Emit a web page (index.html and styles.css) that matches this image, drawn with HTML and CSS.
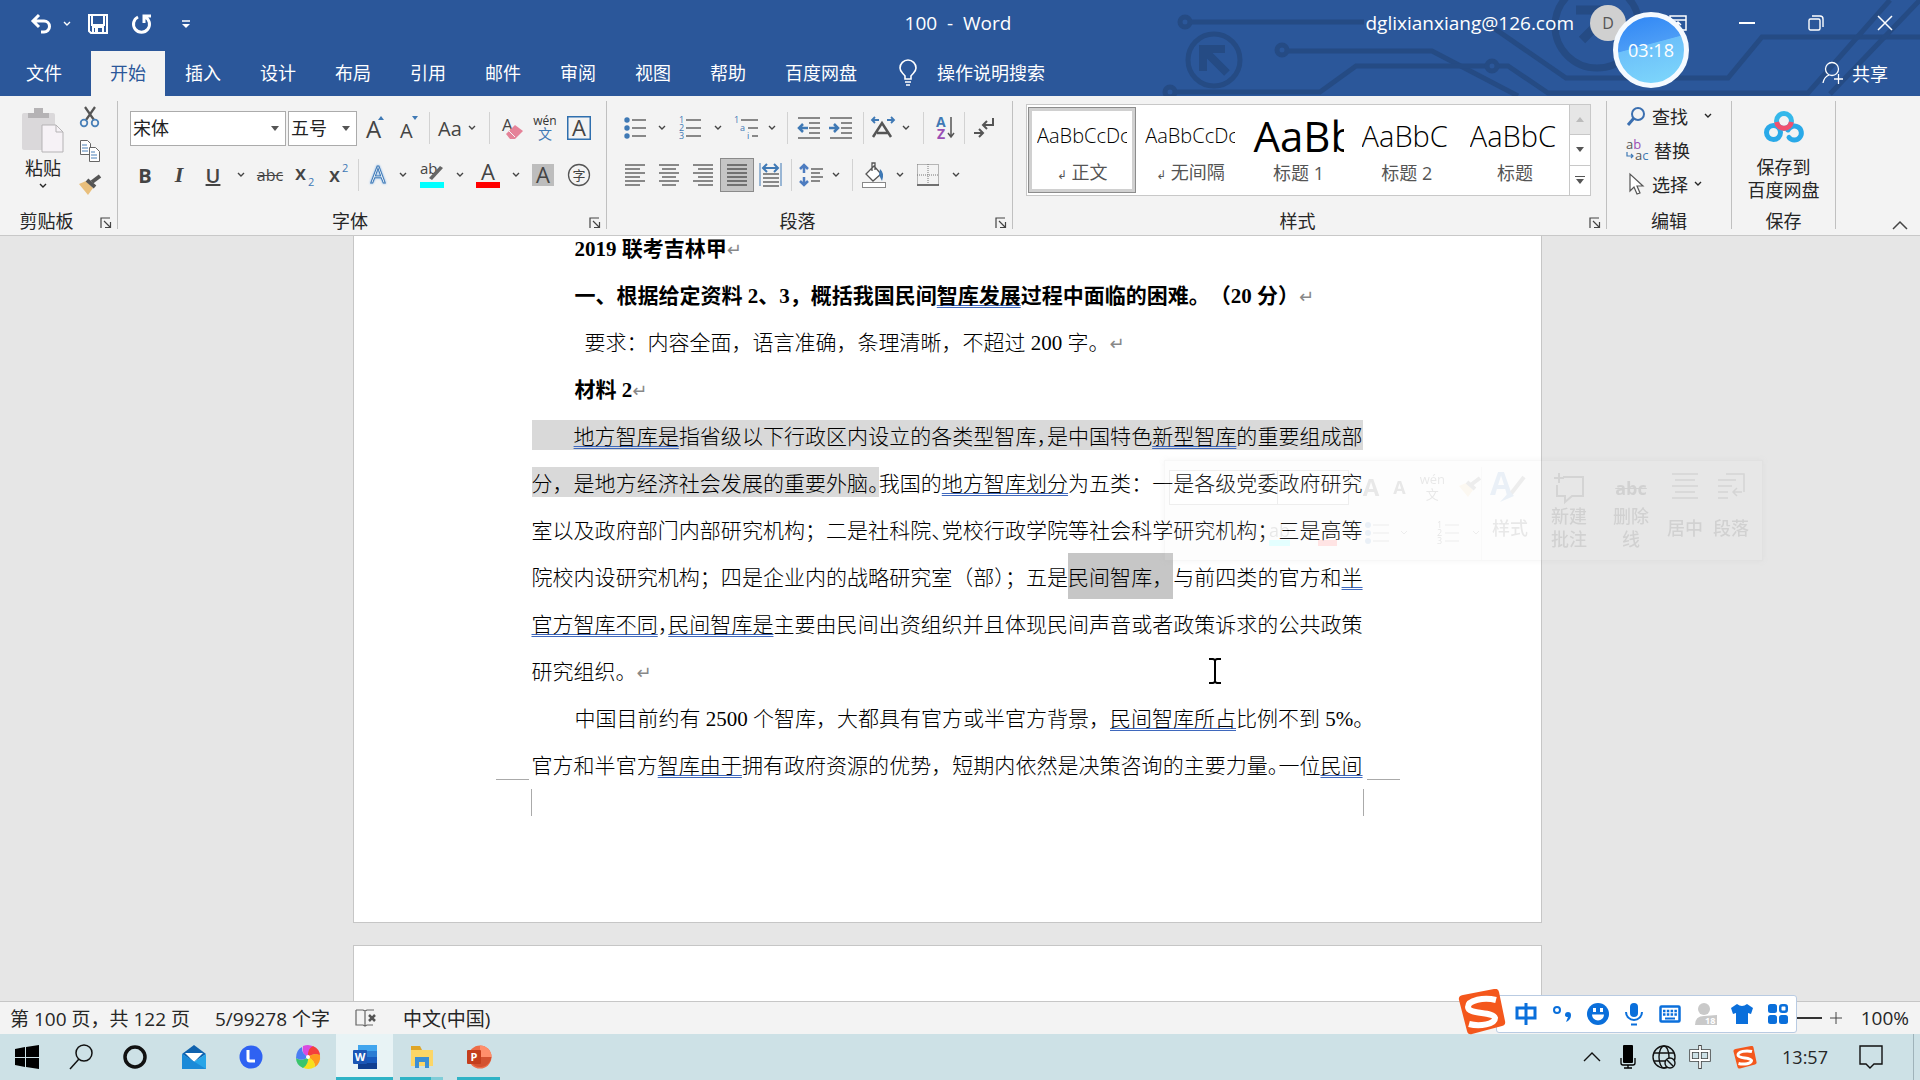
FILE: index.html
```html
<!DOCTYPE html>
<html lang="zh-CN">
<head>
<meta charset="utf-8">
<title>100 - Word</title>
<link rel="stylesheet" href="styles.css">
</head>
<body>
<svg class="defs" aria-hidden="true">
  <symbol id="chev" viewBox="0 0 8 6"><path d="M1 1l3 3 3-3" fill="none" stroke="currentColor" stroke-width="1.4"/></symbol>
  <symbol id="tri" viewBox="0 0 8 5"><path d="M0 0h8L4 5z" fill="currentColor"/></symbol>
  <symbol id="launch" viewBox="0 0 12 12"><path d="M1 11V1h9M4 4l6 6M10.500 5v5.500H5" fill="none" stroke="#444" stroke-width="1.200"/></symbol>
  <symbol id="sogou" viewBox="0 0 48 46"><path d="M5 6L36 0q4-1 5 3l6 29q1 4-3 5l-30 8q-4 1-5-3L1 11q-1-4 4-5z" fill="#f4571c"/><path d="M38 11C26 8 10 11 10 18c0 8 25 4 27 11 0 6-15 9-26 6" fill="none" stroke="#fff" stroke-width="6"/></symbol>
</svg>

<header class="titlebar">
  <svg class="circuit" width="760" height="96" viewBox="0 0 760 96" aria-hidden="true">
    <g fill="none" stroke="#254b84" stroke-width="5">
      <circle cx="25" cy="22" r="5"/><path d="M31 22h173M325 22l81 56h162l34-41h158"/>
      <circle cx="54" cy="60" r="26"/><path d="M43 71V49h22M45 51l22 22" stroke-width="8"/>
      <circle cx="122" cy="50" r="5"/><path d="M128 51h144l86 45"/>
      <circle cx="10" cy="92" r="5"/><path d="M16 92h144l36-26h132M338 66h10l40 27h260l82-93M670 94l90-94"/><circle cx="332" cy="66" r="5"/>
      <circle cx="437" cy="26" r="42" stroke-width="7"/><path d="M416 10h30M422 40l30-30" stroke-width="9"/>
    </g>
  </svg>
  <div class="title-row">
    <div class="quick">
      <button class="q q-undo" aria-label="撤消"><svg width="22" height="20" viewBox="0 0 22 20"><path d="M3 7h11a5 5 0 010 11h-3M9 1L3 7l6 6" fill="none" stroke="currentColor" stroke-width="3"/></svg></button>
      <button class="q q-more" aria-label="撤消列表"><svg width="8" height="6"><use href="#chev"/></svg></button>
      <button class="q q-save" aria-label="保存"><svg width="20" height="20" viewBox="0 0 20 20"><path d="M1 1h18v18H3l-2-2zM4 1v10h12V1M5 19v-6h10v6" fill="none" stroke="currentColor" stroke-width="2"/><path d="M7 14h3v5H7z" fill="currentColor"/></svg></button>
      <button class="q q-redo" aria-label="重复"><svg width="22" height="22" viewBox="0 0 22 22"><path d="M14 4a8 8 0 11-7 0M13 10V3h7" fill="none" stroke="currentColor" stroke-width="3"/></svg></button>
      <button class="q q-cust" aria-label="自定义快速访问工具栏"><svg width="8" height="8" viewBox="0 0 8 8"><path d="M0 1h8" stroke="currentColor" stroke-width="1.500"/><path d="M0 4h8L4 8z" fill="currentColor"/></svg></button>
    </div>
    <h1 class="doc-title">100&nbsp; -&nbsp; Word</h1>
    <div class="account">
      <span>dglixianxiang@126.com</span>
      <span class="avatar">D</span>
      <button class="w-btn w-ribbon" aria-label="功能区显示选项"><svg width="18" height="16" viewBox="0 0 18 16"><path d="M1 1h16v14H1zM1 5h16M9 13V8M6 10l3-3 3 3" fill="none" stroke="currentColor" stroke-width="1.500"/></svg></button>
      <button class="w-btn" aria-label="最小化"><svg width="16" height="2"><path d="M0 1h16" stroke="currentColor" stroke-width="2"/></svg></button>
      <button class="w-btn" aria-label="还原"><svg width="16" height="16" viewBox="0 0 16 16"><rect x="1" y="4" width="11" height="11" rx="1.500" fill="none" stroke="currentColor" stroke-width="1.400"/><path d="M4 1h8q3 0 3 3v8" fill="none" stroke="currentColor" stroke-width="1.400"/></svg></button>
      <button class="w-btn" aria-label="关闭"><svg width="16" height="16" viewBox="0 0 16 16"><path d="M1 1l14 14M15 1L1 15" stroke="currentColor" stroke-width="1.500"/></svg></button>
    </div>
  </div>
  <nav class="tabs">
    <button class="tab tab-file">文件</button>
    <button class="tab active">开始</button>
    <button class="tab">插入</button>
    <button class="tab">设计</button>
    <button class="tab">布局</button>
    <button class="tab">引用</button>
    <button class="tab">邮件</button>
    <button class="tab">审阅</button>
    <button class="tab">视图</button>
    <button class="tab">帮助</button>
    <button class="tab">百度网盘</button>
    <label class="tell"><svg width="18" height="26" viewBox="0 0 18 26"><path d="M6 19v-3C4 13 1 12 1 8a8 8 0 0116 0c0 4-3 5-5 8v3zM6 22h6M7 25h4" fill="none" stroke="currentColor" stroke-width="1.600"/></svg><input type="text" placeholder="操作说明搜索" aria-label="操作说明搜索"></label>
    <button class="share"><svg width="22" height="24" viewBox="0 0 22 24"><circle cx="10" cy="8" r="6.500" fill="none" stroke="currentColor" stroke-width="1.300"/><path d="M1 22q1-6 6-8M12 18h9M16.500 13v10" fill="none" stroke="currentColor" stroke-width="1.300"/></svg>共享</button>
  </nav>
  <div class="timer">03:18</div>
</header>

<section class="ribbon">
  <div class="group g-clip">
    <div class="clip-body">
      <button class="paste"><svg width="42" height="46" viewBox="0 0 42 46"><rect x="0" y="6" width="33" height="37" rx="2" fill="#dad8da"/><path d="M6 6h6V1h9v5h6v5H6z" fill="#b5b3b5"/><path d="M20 18h14l7 7v20H20z" fill="#f6f2f6" stroke="#b5b3b5"/><path d="M34 18v7h7" fill="none" stroke="#b5b3b5"/></svg><span>粘贴</span><svg width="8" height="6"><use href="#chev"/></svg></button>
      <div class="clip-side">
        <button class="ib" aria-label="剪切"><svg width="20" height="22" viewBox="0 0 20 22"><path d="M5 1l9 13M15 1L6 14" stroke="#555" stroke-width="2.200"/><g fill="none" stroke="#4a80b8" stroke-width="1.800"><circle cx="4" cy="17" r="3.300"/><circle cx="15" cy="17" r="3.300"/></g></svg></button>
        <button class="ib" aria-label="复制"><svg width="20" height="22" viewBox="0 0 20 22"><g fill="#fff" stroke="#666"><path d="M.5.5h7l3 3v11H.5z"/><path d="M9.500 7.500h6l4 4v10h-10z"/></g><path d="M2 5h5M2 8h6M2 11h6M11 12h4M11 15h6M11 18h6" stroke="#4a80b8"/></svg></button>
        <button class="ib" aria-label="格式刷"><svg width="22" height="20" viewBox="0 0 22 20"><path d="M0 9l7-3 7 7-5 7z" fill="#e9bf7c"/><path d="M8 5l8 7" stroke="#555" stroke-width="4"/><path d="M13 7l8-6" stroke="#555" stroke-width="4"/></svg></button>
      </div>
    </div>
    <div class="g-label"><span>剪贴板</span><svg width="12" height="12"><use href="#launch"/></svg></div>
  </div>

  <div class="group g-font">
    <div class="rows">
      <div class="row font-r1">
        <span class="combo"><select aria-label="字体"><option>宋体</option></select><svg width="8" height="5"><use href="#tri"/></svg></span>
        <span class="combo combo-size"><select aria-label="字号"><option>五号</option></select><svg width="8" height="5"><use href="#tri"/></svg></span>
        <button class="ib" aria-label="增大字号"><svg width="20" height="24" viewBox="0 0 20 24"><text x="2" y="22" font-size="24" class="ta">A</text><path d="M14 4l3-4 3 4z" fill="#3f79b5"/></svg></button>
        <button class="ib" aria-label="减小字号"><svg width="20" height="24" viewBox="0 0 20 24"><text x="2" y="22" font-size="20" class="ta">A</text><path d="M14 0l3 4 3-4z" fill="#3f79b5"/></svg></button>
        <i class="sep"></i>
        <button class="ib aa" aria-label="更改大小写">Aa<svg width="8" height="6"><use href="#chev"/></svg></button>
        <i class="sep"></i>
        <button class="ib" aria-label="清除格式"><svg width="22" height="24" viewBox="0 0 22 24"><text x="1" y="15" font-size="17" class="ta">A</text><path d="M5 18l9-9 8 6-8 8H9z" fill="#e58298"/><path d="M8 15l6 6" stroke="#f3f3f3"/></svg></button>
        <button class="ib" aria-label="拼音指南"><svg width="26" height="26" viewBox="0 0 26 26"><text x="13" y="10" font-size="12" text-anchor="middle" fill="#333">wén</text><text x="13" y="24" font-size="14" text-anchor="middle" fill="#3f79b5">文</text></svg></button>
        <button class="ib" aria-label="字符边框"><svg width="24" height="24" viewBox="0 0 24 24"><rect x=".75" y=".75" width="22.500" height="22.500" fill="none" stroke="#2f6fae" stroke-width="1.500"/><text x="12" y="20" font-size="22" text-anchor="middle" class="ta">A</text></svg></button>
      </div>
      <div class="row font-r2">
        <button class="ib tb" aria-label="加粗">B</button>
        <button class="ib ti" aria-label="倾斜">I</button>
        <button class="ib tu" aria-label="下划线">U</button>
        <button class="ib" aria-label="下划线样式"><svg width="8" height="6"><use href="#chev"/></svg></button>
        <button class="ib ts" aria-label="删除线">abc</button>
        <button class="ib" aria-label="下标"><svg width="20" height="24" viewBox="0 0 20 24"><text x="0" y="17" font-size="20" class="tx">x</text><text x="13" y="23" font-size="11" fill="#3f79b5">2</text></svg></button>
        <button class="ib" aria-label="上标"><svg width="20" height="24" viewBox="0 0 20 24"><text x="0" y="19" font-size="20" class="tx">x</text><text x="13" y="9" font-size="11" fill="#3f79b5">2</text></svg></button>
        <i class="sep"></i>
        <button class="ib" aria-label="文本效果"><svg width="20" height="24" viewBox="0 0 20 24"><text x="11" y="20" font-size="23" text-anchor="middle" class="tglow">A</text></svg></button>
        <button class="ib" aria-label="文本效果列表"><svg width="8" height="6"><use href="#chev"/></svg></button>
        <button class="ib" aria-label="突出显示"><svg width="24" height="26" viewBox="0 0 24 26"><text x="0" y="12" font-size="15" fill="#444">ab</text><path d="M9 16l11-12 3 2-11 12z" fill="#666"/><path d="M0 20h24v6H0z" fill="#0ff"/></svg></button>
        <button class="ib" aria-label="突出显示颜色"><svg width="8" height="6"><use href="#chev"/></svg></button>
        <button class="ib" aria-label="字体颜色"><svg width="24" height="26" viewBox="0 0 24 26"><text x="12" y="18" font-size="22" text-anchor="middle" class="ta">A</text><path d="M0 20h24v6H0z" fill="#f00"/></svg></button>
        <button class="ib" aria-label="字体颜色列表"><svg width="8" height="6"><use href="#chev"/></svg></button>
        <button class="ib" aria-label="字符底纹"><svg width="22" height="22" viewBox="0 0 22 22"><path d="M0 0h22v22H0z" fill="#bdbdbd"/><text x="11" y="19" font-size="22" text-anchor="middle" class="ta">A</text></svg></button>
        <button class="ib" aria-label="带圈字符"><svg width="24" height="24" viewBox="0 0 24 24"><circle cx="12" cy="12" r="10.500" fill="none" stroke="#555" stroke-width="1.300"/><text x="12" y="17" font-size="13" text-anchor="middle" fill="#444">字</text></svg></button>
      </div>
    </div>
    <div class="g-label"><span>字体</span><svg width="12" height="12"><use href="#launch"/></svg></div>
  </div>

  <div class="group g-para">
    <div class="rows">
      <div class="row para-r1">
        <button class="ib" aria-label="项目符号"><svg width="22" height="22" viewBox="0 0 22 22"><g fill="#3f79b5"><circle cx="3" cy="3" r="2.700"/><circle cx="3" cy="11" r="2.700"/><circle cx="3" cy="19" r="2.700"/></g><path d="M8 3h14M8 11h14M8 19h14" stroke="#666" stroke-width="1.300"/></svg></button>
        <button class="ib" aria-label="项目符号列表"><svg width="8" height="6"><use href="#chev"/></svg></button>
        <button class="ib" aria-label="编号"><svg width="22" height="24" viewBox="0 0 22 24"><g font-size="9" fill="#3f79b5"><text x="0" y="7">1</text><text x="0" y="15">2</text><text x="0" y="23">3</text></g><path d="M7 4h15M7 12h15M7 20h15" stroke="#666" stroke-width="1.300"/></svg></button>
        <button class="ib" aria-label="编号列表"><svg width="8" height="6"><use href="#chev"/></svg></button>
        <button class="ib" aria-label="多级列表"><svg width="24" height="24" viewBox="0 0 24 24"><g font-size="9" fill="#3f79b5"><text x="0" y="7">1</text><text x="6" y="15">a</text><text x="13" y="23">i</text></g><path d="M7 4h17M14 12h10M18 20h6" stroke="#666" stroke-width="1.300"/></svg></button>
        <button class="ib" aria-label="多级列表样式"><svg width="8" height="6"><use href="#chev"/></svg></button>
        <i class="sep"></i>
        <button class="ib" aria-label="减少缩进量"><svg width="24" height="22" viewBox="0 0 24 22"><path d="M1 1h22M12 6h11M12 11h11M12 16h11M1 21h22" stroke="#666" stroke-width="1.300"/><path d="M2 11h9M6 7l-4 4 4 4" fill="none" stroke="#3f79b5" stroke-width="2.500"/></svg></button>
        <button class="ib" aria-label="增加缩进量"><svg width="24" height="22" viewBox="0 0 24 22"><path d="M1 1h22M12 6h11M12 11h11M12 16h11M1 21h22" stroke="#666" stroke-width="1.300"/><path d="M0 11h9M5 7l4 4-4 4" fill="none" stroke="#3f79b5" stroke-width="2.500"/></svg></button>
        <i class="sep"></i>
        <button class="ib" aria-label="中文版式"><svg width="24" height="22" viewBox="0 0 24 22"><path d="M2 20L11 6l9 14M6 16h11" fill="none" stroke="#555" stroke-width="2.500"/><path d="M1 3h7M16 3h7M4 0L1 3l3 3M20 0l3 3-3 3" fill="none" stroke="#3f79b5" stroke-width="1.800"/></svg></button>
        <button class="ib" aria-label="中文版式列表"><svg width="8" height="6"><use href="#chev"/></svg></button>
        <i class="sep"></i>
        <button class="ib" aria-label="排序"><svg width="20" height="26" viewBox="0 0 20 26"><g font-size="14" font-weight="700"><text x="0" y="12" fill="#3f79b5">A</text><text x="1" y="24" fill="#9a4fb5">Z</text></g><path d="M15 2v20M12 18l3 4 3-4" fill="none" stroke="#555" stroke-width="1.500"/></svg></button>
        <i class="sep"></i>
        <button class="ib" aria-label="显示编辑标记"><svg width="22" height="22" viewBox="0 0 22 22"><path d="M20 1v7h-9M14 4l-4 4 4 4M1 16h9M6 12l4 4-4 4" fill="none" stroke="#555" stroke-width="2"/></svg></button>
      </div>
      <div class="row para-r2">
        <button class="ib" aria-label="左对齐"><svg width="20" height="22" viewBox="0 0 20 22"><path d="M0 1h20M0 5h15M0 9h20M0 13h15M0 17h20M0 21h15" stroke="#666" stroke-width="1.300"/></svg></button>
        <button class="ib" aria-label="居中"><svg width="20" height="22" viewBox="0 0 20 22"><path d="M0 1h20M3 5h14M0 9h20M3 13h14M0 17h20M3 21h14" stroke="#666" stroke-width="1.300"/></svg></button>
        <button class="ib" aria-label="右对齐"><svg width="20" height="22" viewBox="0 0 20 22"><path d="M0 1h20M5 5h15M0 9h20M5 13h15M0 17h20M5 21h15" stroke="#666" stroke-width="1.300"/></svg></button>
        <button class="ib pressed" aria-label="两端对齐"><svg width="20" height="22" viewBox="0 0 20 22"><path d="M0 1h20M0 5h20M0 9h20M0 13h20M0 17h20M0 21h20" stroke="#555" stroke-width="1.300"/></svg></button>
        <button class="ib" aria-label="分散对齐"><svg width="24" height="24" viewBox="0 0 24 24"><path d="M1 0v23M22 0v23" stroke="#3f79b5"/><path d="M4 5h15M8 1L4 5l4 4M15 1l4 4-4 4" fill="none" stroke="#3f79b5" stroke-width="2"/><path d="M4 11h16M4 15h16M4 19h16M4 23h16" stroke="#666" stroke-width="1.300"/></svg></button>
        <i class="sep"></i>
        <button class="ib" aria-label="行距"><svg width="24" height="24" viewBox="0 0 24 24"><path d="M5 2v8M5 14v8M1 6l4-4 4 4M1 18l4 4 4-4" fill="none" stroke="#4d7cc0" stroke-width="2.500"/><path d="M12 6h12M12 10h9M12 14h12M12 18h9" stroke="#666" stroke-width="1.300"/></svg></button>
        <button class="ib" aria-label="行距列表"><svg width="8" height="6"><use href="#chev"/></svg></button>
        <i class="sep"></i>
        <button class="ib" aria-label="底纹"><svg width="24" height="26" viewBox="0 0 24 26"><path d="M4 12l8-8 7 8-8 7zM10 9V1h3v7" fill="#fff" stroke="#555" stroke-width="1.300"/><path d="M18 7q5 4 2 12l-3-6z" fill="#3f79b5"/><rect x=".5" y="20.500" width="23" height="5" fill="#fff" stroke="#888"/></svg></button>
        <button class="ib" aria-label="底纹列表"><svg width="8" height="6"><use href="#chev"/></svg></button>
        <button class="ib" aria-label="边框"><svg width="22" height="22" viewBox="0 0 22 22"><path d="M.5.5h21v20M.5.5v20M11 0v20M0 11h22" fill="none" stroke="#777" stroke-dasharray="1 1"/><path d="M0 21h22" stroke="#444" stroke-width="1.500"/></svg></button>
        <button class="ib" aria-label="边框列表"><svg width="8" height="6"><use href="#chev"/></svg></button>
      </div>
    </div>
    <div class="g-label"><span>段落</span><svg width="12" height="12"><use href="#launch"/></svg></div>
  </div>

  <div class="group g-styles">
    <div class="gallery">
      <button class="style chosen"><span class="sample">AaBbCcDc</span><span class="name"><small>↲</small> 正文</span></button>
      <button class="style"><span class="sample">AaBbCcDc</span><span class="name"><small>↲</small> 无间隔</span></button>
      <button class="style"><span class="sample s-h1">AaBb</span><span class="name">标题 1</span></button>
      <button class="style"><span class="sample s-h2">AaBbC</span><span class="name">标题 2</span></button>
      <button class="style"><span class="sample s-h2">AaBbC</span><span class="name">标题</span></button>
      <div class="gal-scroll">
        <button class="off" aria-label="上一行"><svg width="8" height="5" viewBox="0 0 8 5"><path d="M0 5h8L4 0z" fill="#bbb"/></svg></button>
        <button aria-label="下一行"><svg width="8" height="5"><use href="#tri"/></svg></button>
        <button aria-label="其他样式"><svg width="10" height="8" viewBox="0 0 10 8"><path d="M0 .5h10" stroke="#555"/><path d="M1 3h8L5 8z" fill="#555"/></svg></button>
      </div>
    </div>
    <div class="g-label"><span>样式</span><svg width="12" height="12"><use href="#launch"/></svg></div>
  </div>

  <div class="group g-edit">
    <div class="edit-list">
      <button class="eb eb-wide"><svg width="20" height="20" viewBox="0 0 20 20"><circle cx="12" cy="8" r="6" fill="none" stroke="#3b6fb0" stroke-width="2"/><path d="M8 12l-6 7" stroke="#3b6fb0" stroke-width="3"/></svg>查找<svg width="8" height="6"><use href="#chev"/></svg></button>
      <button class="eb"><svg width="24" height="22" viewBox="0 0 24 22"><text x="0" y="10" font-size="13" fill="#555">a<tspan fill="#9a4fb5">b</tspan></text><text x="9" y="21" font-size="13" fill="#555">a<tspan fill="#3f79b5">c</tspan></text><path d="M1 13v4h6M5 15l2 2-2 2" fill="none" stroke="#3f79b5" stroke-width="1.200"/></svg>替换</button>
      <button class="eb"><svg width="20" height="22" viewBox="0 0 20 22"><path d="M4 1v17l4-4 3 7 3-1-3-7h6z" fill="#fff" stroke="#555" stroke-width="1.200"/></svg>选择<svg width="8" height="6"><use href="#chev"/></svg></button>
    </div>
    <div class="g-label"><span>编辑</span></div>
  </div>

  <div class="group g-pan">
    <button class="pan"><svg width="40" height="32" viewBox="0 0 40 32"><g fill="none" stroke-width="5"><circle cx="9.500" cy="21.500" r="7" stroke="#29a9e8"/><path d="M25 26.500A7 7 0 1024 19" stroke="#29a9e8" stroke-linecap="round"/><circle cx="20" cy="10" r="7.500" stroke="#35b8ea"/><path d="M12.600 11a7.500 7.500 0 0014.800 0" stroke="#f0506e"/></g></svg><span>保存到<br>百度网盘</span></button>
    <div class="g-label"><span>保存</span></div>
  </div>
  <button class="fold" aria-label="折叠功能区"><svg width="16" height="10" viewBox="0 0 16 10"><path d="M1 9l7-7 7 7" fill="none" stroke="#444" stroke-width="1.500"/></svg></button>
</section>

<main class="workspace">
  <article class="sheet">
    <p class="ind b">2019 联考吉林甲<span class="ret">↵</span></p>
    <p class="ind b">一、根据给定资料 2、3，概括我国民间<u>智库发展</u>过程中面临的困难。（20 分）<span class="ret">↵</span></p>
    <p class="light ind2">要求：内容全面，语言准确，条理清晰，不超过<span class="num"> 200 </span>字。<span class="ret">↵</span></p>
    <p class="ind b">材料 2<span class="ret">↵</span></p>
    <p class="light just"><span class="hl">　　<u>地方智库是</u>指省级以下行政区内设立的各类型智库<span class="half">，</span>是中国特色<u>新型智库</u>的重要组成部</span></p>
    <p class="light just"><span class="hl">分，是地方经济社会发展的重要外脑<span class="half">。</span></span>我国的<u>地方智库划分</u>为五类：一是各级党委政府研究</p>
    <p class="light just">室以及政府部门内部研究机构；二是社科院<span class="half">、</span>党校行政学院等社会科学研究机构；三是高等</p>
    <p class="light just">院校内设研究机构；四是企业内的战略研究室（部<span class="half">）</span>；五是<span class="sel">民间智库，</span>与前四类的官方和<u>半</u></p>
    <p class="light just"><u>官方智库不同</u><span class="half">，</span><u>民间智库是</u>主要由民间出资组织并且体现民间声音或者政策诉求的公共政策</p>
    <p class="light">研究组织。<span class="ret">↵</span></p>
    <p class="light just ind">中国目前约有<span class="num"> 2500 </span>个智库，大都具有官方或半官方背景，<u>民间智库所占</u>比例不到<span class="num"> 5%</span><span class="half">。</span></p>
    <p class="light just">官方和半官方<u>智库由于</u>拥有政府资源的优势，短期内依然是决策咨询的主要力量<span class="half">。</span>一位<u>民间</u></p>
    <svg class="marks" width="904" height="38" viewBox="0 0 904 38" aria-hidden="true"><path d="M0 .5h33M871 .5h33M35.500 10v27M867.500 10v27" stroke="#aaa" fill="none"/></svg>
  </article>
  <article class="sheet next" aria-label="下一页"></article>

  <div class="mini" aria-hidden="true">
    <div class="mini-fmt">
      <div class="mini-row"><span class="mini-box"></span><span class="mini-box mini-size"></span><b class="big">A</b><b>A</b><span class="mini-py">wén<br>文</span><svg width="22" height="20" viewBox="0 0 22 20"><path d="M0 9l7-3 7 7-5 7z" fill="#e9bf7c"/><path d="M8 5l8 7M13 7l8-6" stroke="#555" stroke-width="4"/></svg></div>
      <div class="mini-row mini-row2"><span class="mini-ab">ab</span><span class="mini-a"></span><svg width="44" height="22" viewBox="0 0 44 22"><g fill="#3f79b5"><circle cx="3" cy="3" r="3"/><circle cx="3" cy="11" r="3"/><circle cx="3" cy="19" r="3"/></g><path d="M8 3h16M8 11h16M8 19h16M36 9l3 3 3-3" fill="none" stroke="#555"/></svg><svg width="44" height="22" viewBox="0 0 44 22"><g font-size="9"><text x="0" y="6">1</text><text x="0" y="14">2</text><text x="0" y="22">3</text></g><path d="M8 3h14M8 11h14M8 19h14M36 9l3 3 3-3" fill="none" stroke="#555"/></svg></div>
    </div>
    <div class="mini-cmd mini-style"><svg width="40" height="36" viewBox="0 0 40 36"><text x="0" y="26" font-size="32" font-weight="700" fill="#3f79b5">A</text><path d="M34 8L20 26" stroke="#555" stroke-width="4"/><path d="M20 22l4 5-14 6z" fill="#3f79b5"/></svg><span>样式</span></div>
    <div class="mini-cmd mini-wide"><svg width="32" height="30" viewBox="0 0 32 30"><path d="M10 4h20v19H19l-7 6v-6H4V12M1 5h10M6 0v10" fill="none" stroke="#444" stroke-width="2"/></svg><span>新建<br>批注</span></div>
    <div class="mini-cmd mini-wide"><s>abc</s><span>删除<br>线</span></div>
    <div class="mini-cmd"><svg width="26" height="26" viewBox="0 0 26 26"><path d="M0 1h26M3 7h20M0 13h26M3 19h20M0 25h26" stroke="#444" stroke-width="1.500"/></svg><span>居中</span></div>
    <div class="mini-cmd"><svg width="26" height="26" viewBox="0 0 26 26"><path d="M8 1h18v18M0 7h18M0 13h14M0 19h10M0 25h10M24 19h-8M19 15l-4 4 4 4" fill="none" stroke="#444" stroke-width="1.500"/></svg><span>段落</span></div>
  </div>
  <svg class="ibeam" width="14" height="26" viewBox="0 0 14 26" aria-hidden="true"><path d="M1 1h4l2 1 2-1h4M7 2v22M1 25h4l2-1 2 1h4" fill="none" stroke="#000" stroke-width="2"/></svg>
</main>

<footer class="status">
  <span class="st-page">第 100 页，共 122 页</span>
  <span class="st-count">5/99278 个字</span>
  <svg class="st-proof" width="22" height="18" viewBox="0 0 22 18"><path d="M1 1h7l2 1 2-1h7M1 1v15h7l2 1 2-1h6M10 2v15" fill="none" stroke="#666" stroke-width="1.200"/><path d="M14 6l6 6M20 6l-6 6" stroke="#555" stroke-width="2.500"/></svg>
  <span>中文(中国)</span>
  <input class="zoom" type="range" aria-label="缩放" min="10" max="500" value="100">
  <button class="plus" aria-label="放大"><svg width="12" height="12"><path d="M6 0v12M0 6h12" stroke="#444"/></svg></button>
  <span class="pct">100%</span>
</footer>

<div class="ime">
  <svg class="ime-logo" width="48" height="46"><use href="#sogou"/></svg>
  <button aria-label="中文"><svg width="22" height="22" viewBox="0 0 22 22"><path d="M2 5h18v10H2zM11 0v22" fill="none" stroke="#0a6fdb" stroke-width="3"/></svg></button>
  <button aria-label="中文标点"><svg width="20" height="20" viewBox="0 0 20 20"><circle cx="5" cy="6" r="3" fill="none" stroke="#0a6fdb" stroke-width="2"/><path d="M13 11a3 3 0 116 0q0 5-5 7l2-5q-3 0-3-2z" fill="#0a6fdb"/></svg></button>
  <button aria-label="表情"><svg width="22" height="22" viewBox="0 0 22 22"><circle cx="11" cy="11" r="11" fill="#0a6fdb"/><path d="M5 11.500h12a6 6 0 01-12 0zM6 5h3v4H6zM13 5h3v4h-3z" fill="#fff"/></svg></button>
  <button aria-label="语音"><svg width="18" height="24" viewBox="0 0 18 24"><rect x="5" y="1" width="8" height="14" rx="4" fill="#0a6fdb"/><path d="M1 10a8 8 0 0016 0M6 22.500h6" fill="none" stroke="#0a6fdb" stroke-width="2"/></svg></button>
  <button aria-label="软键盘"><svg width="22" height="18" viewBox="0 0 22 18"><rect x="1.500" y="1.500" width="19" height="15" rx="1" fill="none" stroke="#0a6fdb" stroke-width="2.500"/><path d="M4 6h14M4 9.500h14" stroke="#0a6fdb" stroke-width="2.400" stroke-dasharray="2.500 1.300"/><path d="M6 13.500h10" stroke="#0a6fdb" stroke-width="2"/></svg></button>
  <button aria-label="用户"><svg width="22" height="24" viewBox="0 0 22 24"><circle cx="9" cy="7" r="6" fill="#c9c9c9"/><path d="M0 23q0-9 9-9l13-1v10z" fill="#c9c9c9"/><text x="10" y="22" font-size="9" font-weight="700" fill="#fff">18</text></svg></button>
  <button aria-label="皮肤"><svg width="24" height="22" viewBox="0 0 24 22"><path d="M7 1q5 4 10 0l6 4-2 6-3-1v11H6V10l-3 1-2-6z" fill="#0a6fdb"/></svg></button>
  <button aria-label="工具箱"><svg width="20" height="20" viewBox="0 0 20 20"><g fill="#0a6fdb"><rect width="9" height="9" rx="2.500"/><rect y="11" width="9" height="9" rx="2.500"/><rect x="11" y="11" width="9" height="9" rx="2.500"/></g><rect x="12.250" y="1.250" width="6.500" height="6.500" rx="2" fill="none" stroke="#0a6fdb" stroke-width="2.500"/></svg></button>
</div>

<nav class="taskbar">
  <button class="tk" aria-label="开始"><svg width="24" height="24" viewBox="0 0 24 24"><path d="M0 4l10-2v10H0zM11 2l13-2v12H11zM0 13h10v9L0 20zM11 13h13v11l-13-2z"/></svg></button>
  <button class="tk" aria-label="搜索"><svg width="24" height="26" viewBox="0 0 24 26"><circle cx="15" cy="9" r="8" fill="none" stroke="#111" stroke-width="1.500"/><path d="M10 15L1 25" stroke="#111" stroke-width="1.500"/></svg></button>
  <button class="tk" aria-label="Cortana"><svg width="24" height="24" viewBox="0 0 24 24"><circle cx="12" cy="12" r="10" fill="none" stroke="#111" stroke-width="3.500"/></svg></button>
  <div class="apps">
  <button class="tk tw" aria-label="邮件"><svg width="24" height="24" viewBox="0 0 24 24"><path d="M0 9l12-9 12 9-12 8z" fill="#0f62ae"/><path d="M3 8h18l-9 9z" fill="#fff"/><path d="M0 9l12 8 12-8v15H0z" fill="#27a5e8"/><path d="M0 9l24 15H0z" fill="#1b8ad8"/></svg></button>
  <button class="tk tw" aria-label="L"><svg width="24" height="24" viewBox="0 0 24 24"><circle cx="12" cy="12" r="11.500" fill="#2f62f2"/><path d="M9 5v9q0 2 2 2h5" fill="none" stroke="#fff" stroke-width="3"/></svg></button>
  <button class="tk tw" aria-label="照片"><svg width="24" height="24" viewBox="0 0 24 24"><g transform="translate(12 12)"><path d="M0 0Q-7-3-5-11Q2-14 7-9Q1-8 0 0z" fill="#d94be0"/><path d="M0 0Q-1-8 5-11Q12-8 12-1Q7-5 0 0z" fill="#f4403c"/><path d="M0 0Q6-5 12-2Q13 6 7 10Q7 4 0 0z" fill="#ff9a1e"/><path d="M0 0Q7 3 7 10Q0 14-6 10Q0 8 0 0z" fill="#f7e01c"/><path d="M0 0Q1 7-5 11Q-12 8-12 1Q-6 5 0 0z" fill="#3ac56c"/><path d="M0 0Q-6 5-12 1Q-12-7-6-10Q-7-4 0 0z" fill="#4b7df2"/></g><circle cx="12" cy="12" r="2" fill="#fff"/></svg></button>
  <button class="tk tw on" aria-label="Word"><svg width="24" height="24" viewBox="0 0 24 24"><path d="M5 0h19v6H5z" fill="#41a5ee"/><path d="M5 6h19v6H5z" fill="#2b7cd3"/><path d="M5 12h19v6H5z" fill="#185abd"/><path d="M5 18h19v6H5z" fill="#103f91"/><rect y="5" width="14" height="14" rx="1" fill="#1b56b5"/><text x="7" y="16" font-size="11" font-weight="700" fill="#fff" text-anchor="middle">W</text></svg></button>
  <button class="tk tw run two" aria-label="文件资源管理器"><svg width="24" height="22" viewBox="0 0 24 22"><path d="M1 0h9l2 4h11v16H1z" fill="#e0a526"/><path d="M1 4h22v16H1z" fill="#fcd667"/><path d="M5 22V11h14v11h-4v-6H9v6z" fill="#3d8fd4"/></svg></button>
  <button class="tk tw run" aria-label="PowerPoint"><svg width="24" height="24" viewBox="0 0 24 24"><circle cx="13" cy="12" r="11.500" fill="#ed6c47"/><path d="M13 .5a11.500 11.500 0 0111.500 11.500H13z" fill="#ff8f6b"/><path d="M2 12h22.500a11.500 11.500 0 01-22 3z" fill="#d35230"/><rect y="5" width="14" height="14" rx="1" fill="#c43e1c"/><text x="7" y="16" font-size="11" font-weight="700" fill="#fff" text-anchor="middle">P</text></svg></button>
  </div>
  <div class="tray">
    <button aria-label="显示隐藏的图标"><svg width="18" height="10" viewBox="0 0 18 10"><path d="M1 9l8-8 8 8" fill="none" stroke="#111" stroke-width="1.400"/></svg></button>
    <button aria-label="麦克风"><svg width="16" height="24" viewBox="0 0 16 24"><rect x="3" width="10" height="18" rx="1"/><path d="M1 13v5q0 2 2 2h10q2 0 2-2v-5M8 20v3M4 23h8" fill="none" stroke="#000" stroke-width="1.300"/></svg></button>
    <button aria-label="网络"><svg width="24" height="24" viewBox="0 0 24 24"><g fill="none" stroke="#111" stroke-width="1.400"><circle cx="12" cy="12" r="11"/><ellipse cx="12" cy="12" rx="5" ry="11"/><path d="M2 8h20M2 16h20"/><circle cx="18" cy="18" r="5" fill="#cde1e6"/><path d="M15 15l6 6"/></g></svg></button>
    <button aria-label="输入法"><svg width="22" height="24" viewBox="0 0 22 24"><path d="M2 6h18v9H2zM11 0v24" fill="none" stroke="#444" stroke-width="3.500"/><path d="M2 6h18v9H2zM11 1v22" fill="none" stroke="#fff" stroke-width="1.800"/></svg></button>
    <button class="t-sg" aria-label="搜狗输入法"><svg width="24" height="23"><use href="#sogou"/></svg></button>
    <time class="clock">13:57</time>
    <button class="t-note" aria-label="通知"><svg width="24" height="24" viewBox="0 0 24 24"><path d="M1 1h22v18h-8l-4 4-4-4H1z" fill="none" stroke="#111" stroke-width="1.400"/></svg></button>
  </div>
</nav>
</body>
</html>
```
FILE: styles.css
```css
* { box-sizing: border-box; }
body {
  margin: 0;
  height: 100vh;
  display: flex;
  flex-direction: column;
  overflow: hidden;
  position: relative;
  font-family: "Open Sans", "Noto Sans CJK SC", sans-serif;
  font-size: 18px;
  color: #262626;
  background: #e6e6e6;
}
button, input, select { font: inherit; color: inherit; background: none; border: 0; margin: 0; padding: 0; }
button { display: flex; align-items: center; justify-content: center; white-space: nowrap; }
svg { flex: none; display: block; overflow: visible; }
.defs { position: absolute; width: 0; height: 0; }

/* title bar and tabs */
.titlebar { position: relative; background: #2b579a; color: #fff; height: 96px; flex: none; }
.circuit { position: absolute; right: 0; top: 0; overflow: hidden; }
.title-row { position: relative; display: grid; grid-template-columns: 1fr auto 1fr; height: 51px; align-items: start; }
.quick { display: flex; height: 48px; padding-left: 24px; }
.q-undo { width: 34px; }
.q-more { width: 18px; }
.q-save { width: 44px; }
.q-redo { width: 44px; }
.q-cust { width: 44px; }
.doc-title { margin: 0; padding-right: 4px; font-size: 19px; font-weight: 400; line-height: 46px; white-space: pre; }
.account { display: flex; align-items: center; justify-content: flex-end; height: 46px; padding-right: 1px; font-size: 19px; }
.avatar { width: 36px; height: 36px; border-radius: 50%; background: #d0d0d0; color: #555; font-size: 16px; line-height: 36px; text-align: center; margin-left: 16px; }
.w-btn { width: 69px; height: 46px; }
.w-ribbon { width: 86px; padding-left: 18px; }
.tabs { position: relative; display: flex; height: 45px; gap: 1px; }
.tab { padding: 0 19px 4px; }
.tab-file { width: 90px; padding-right: 21px; }
.tab.active { background: #f3f3f3; color: #2b579a; }
.tell { display: flex; align-items: center; gap: 20px; margin-left: 22px; padding-bottom: 2px; }
.tell input { width: 200px; height: 30px; }
.tell input::placeholder { color: #fff; opacity: 1; }
.share { margin-left: auto; margin-right: 32px; gap: 8px; padding-bottom: 2px; }
.timer {
  position: absolute; right: 231px; top: 12px; width: 76px; height: 76px;
  border: 5px solid #f5faff; border-radius: 50%;
  background: linear-gradient(165deg, #2f86f5 0, #4b9cf6 42%, #6cc0fa 43%, #7fd8fb 100%);
  line-height: 66px; text-align: center; z-index: 3;
}

/* ribbon */
.ribbon { flex: none; display: flex; height: 140px; background: #f3f3f3; border-bottom: 1px solid #c8c8c8; }
.group { display: flex; flex-direction: column; justify-content: space-between; margin: 5px 0 6px; border-right: 1px solid #c0c0c0; flex: none; }
.g-clip { width: 118px; }
.g-font { width: 489px; }
.g-para { width: 406px; }
.g-styles { flex: 1; min-width: 0; }
.g-edit { width: 125px; }
.g-pan { width: 104px; }
.g-label { display: flex; align-items: flex-end; height: 16px; line-height: 16px; }
.g-label span { flex: 1; text-align: center; }
.g-label svg { margin: 0 5px 0 7px; }
.ib { height: 34px; color: #444; min-width: 0; }
.sep { justify-self: center; width: 1px; height: 32px; background: #d2d2d2; }
.rows { padding-top: 4px; display: flex; flex-direction: column; gap: 1px; }
.row { display: grid; height: 46px; align-items: center; }
.font-r1 { margin-left: 12px; grid-template-columns: 158px 70px 32px 36px 6px 50px 14px 32px 34px 34px; }
.font-r2 { margin-left: 10px; grid-template-columns: 34px 34px 34px 22px 36px 34px 34px 4px 34px 18px 40px 16px 40px 16px 38px 34px; }
.para-r1 { margin-left: 11px; grid-template-columns: 34px 20px 36px 20px 36px 16px 14px 30px 34px 10px 30px 16px 18px 28px 8px 32px; }
.para-r2 { margin-left: 11px; grid-template-columns: 34px 34px 34px 34px 34px 6px 34px 16px 16px 28px 24px 32px 24px; }
.combo { display: flex; align-items: center; position: relative; height: 35px; width: 156px; border: 1px solid #ababab; background: #fff; color: #555; }
.combo-size { width: 69px; }
.combo select { appearance: none; flex: 1; width: 0; height: 33px; padding-left: 2px; color: #222; }
.combo svg { margin: 0 6px 0 2px; }
.ta, .tx { fill: #444; }
.tx { font-weight: 600; }
.tglow { fill: #fff; stroke: #3f79b5; filter: drop-shadow(0 0 1px #7fb2ea); }
.aa { font-size: 20px; gap: 6px; }
.tb { font-weight: 700; font-size: 20px; }
.ti { font-family: "Liberation Serif", serif; font-style: italic; font-weight: 700; font-size: 22px; }
.tu { font-weight: 600; text-decoration: underline; font-size: 20px; }
.ts { text-decoration: line-through; font-size: 16px; }
.pressed { background: #c5c5c5; border: 1px solid #8a8a8a; }

.clip-body { display: flex; align-items: flex-start; height: 100px; padding: 6px 0 0 20px; }
.paste { flex-direction: column; width: 46px; line-height: 28px; gap: 1px; }
.clip-side { display: flex; flex-direction: column; margin: -7px 0 0 8px; width: 32px; }
.clip-side .ib { width: 32px; }

.gallery { display: flex; height: 92px; margin: 3px 15px 0 13px; border: 1px solid #c8c8c8; background: #fff; padding-left: 1px; }
.style { flex: 1 1 0; min-width: 0; flex-direction: column; justify-content: flex-start; padding: 2px 5px 0; margin: 2px 0; border: 4px solid transparent; }
.style.chosen { border-color: #d0d0d0; outline: 1px solid #8c8c8c; outline-offset: -1px; }
.sample { width: 100%; height: 46px; line-height: 46px; overflow: hidden; font-size: 20px; font-weight: 300; color: #000; text-align: left; }
.s-h1 { font-size: 42px; font-weight: 500; }
.s-h2 { font-size: 29px; }
.name { line-height: 28px; color: #555; }
.name small { font-size: 12px; font-family: "DejaVu Sans", sans-serif; }
.gal-scroll { display: flex; flex-direction: column; width: 21px; flex: none; border-left: 1px solid #c8c8c8; }
.gal-scroll button { flex: 1; color: #555; }
.gal-scroll button + button { border-top: 1px solid #c8c8c8; }
.gal-scroll .off { background: #e6e6e6; }

.edit-list { display: flex; flex-direction: column; margin-top: -2px; }
.eb { height: 34px; justify-content: flex-start; padding-left: 17px; gap: 4px; }
.eb svg:first-child { width: 24px; }
.eb svg:last-child { margin-left: 2px; }
.eb-wide svg:last-child { margin-left: 12px; }
.pan { flex-direction: column; line-height: 23px; gap: 13px; padding-top: 10px; }
.fold { width: 84px; align-self: flex-end; height: 20px; padding-left: 44px; }

/* document */
.workspace { flex: 1; min-height: 0; position: relative; overflow: hidden; display: flex; flex-direction: column; align-items: center; gap: 22px; padding-right: 26px; }
.sheet {
  position: relative; width: 1189px; max-width: 100%; flex: none; margin-top: -11px; padding: 0 178px 132px;
  background: #fff; border: 1px solid #c6c6c6;
  font-family: "Liberation Serif", "Noto Sans CJK SC", serif; font-size: 21px; color: #000;
  text-spacing-trim: space-all;
}
.next { margin: 0; height: 400px; }
.sheet p { margin: 0; line-height: 47px; height: 47px; white-space: nowrap; }
.sheet .light { font-family: "Noto Sans CJK SC", sans-serif; font-weight: 300; line-height: 43px; }
.just { text-align: justify; text-align-last: justify; }
.ind { padding-left: 43px; }
.ind2 { padding-left: 53px; }
.b { font-weight: 700; }
.num { font-family: "Liberation Serif", serif; font-weight: 400; }
.sheet u { text-decoration: underline double #3f68bd 1px; text-underline-offset: 2px; text-decoration-skip-ink: none; }
.half { font-feature-settings: "halt"; }
.hl { background: #d9d9d9; }
.sel { background: #c6c6c6; padding: 8px 0; }
.ret { font-family: "DejaVu Sans", sans-serif; font-size: 18px; font-weight: 400; color: #888; line-height: 20px; }
.marks { position: absolute; left: 142px; bottom: 105px; }
.ibeam { position: absolute; left: 1208px; top: 422px; }

.mini { position: absolute; left: 1164px; top: 224px; height: 101px; display: flex; padding: 6px 8px 0 4px; border: 1px solid #bbb; box-shadow: 0 0 6px #999; background: #f5f5f5; opacity: .1; line-height: 34px; }
.mini-fmt { width: 313px; border-right: 1px solid #ccc; }
.mini-row { display: flex; align-items: center; height: 40px; gap: 14px; }
.mini-row2 { padding-left: 100px; margin-top: 6px; gap: 28px; }
.mini-box { width: 111px; height: 35px; border: 1px solid #666; background: #fff; }
.mini-size { width: 73px; margin-left: -15px; }
.big { font-size: 24px; }
.mini-py { font-size: 13px; line-height: 15px; text-align: center; }
.mini-ab { border-bottom: 6px solid #0ff; line-height: 20px; width: 24px; }
.mini-a { border-bottom: 6px solid #f00; height: 26px; width: 24px; }
.mini-cmd { display: flex; flex-direction: column; align-items: center; width: 46px; line-height: 23px; padding-top: 6px; gap: 18px; font-weight: 500; text-align: center; }
.mini-cmd s { line-height: 30px; font-weight: 700; }
.mini-wide { width: 62px; gap: 2px; }
.mini-style { width: 56px; padding-top: 2px; gap: 12px; }

/* status bar */
.status { flex: none; display: flex; align-items: center; height: 33px; padding: 0 11px 0 10px; background: #f3f3f3; border-top: 1px solid #c6c6c6; white-space: nowrap; font-size: 19px; }
.st-page { margin-right: 25px; }
.st-count { margin-right: 25px; }
.st-proof { margin-right: 26px; }
.zoom { appearance: none; margin-left: auto; width: 130px; height: 2px; background: #333; }
.zoom::-webkit-slider-thumb { appearance: none; width: 6px; height: 16px; background: #555; }
.plus { width: 28px; height: 24px; }
.pct { margin-left: 11px; }

.ime { position: absolute; right: 123px; bottom: 47px; width: 301px; height: 38px; display: flex; align-items: center; padding-left: 11px; background: #fff; border: 1px solid #b9cbe2; border-radius: 3px; z-index: 2; }
.ime button { width: 36px; height: 36px; }
.ime-logo { position: absolute; left: -39px; top: -7px; }

/* task bar */
.taskbar { flex: none; display: flex; height: 46px; background: #cde1e6; }
.apps { display: flex; margin-left: 3px; }
.tk { width: 54px; border-top: 3px solid transparent; border-bottom: 3px solid transparent; }
.tw { width: 57px; }
.tk.on { background: #e8f3f5; border-top-color: #e8f3f5; border-bottom-color: #2fb3c6; }
.run { background: linear-gradient(#2fb3c6, #2fb3c6) center bottom / 43px 3px no-repeat; background-origin: border-box; }
.two { background-image: linear-gradient(90deg, #2fb3c6 72%, #80cdd8 72%); }
.tray { margin-left: auto; display: flex; align-items: center; padding-right: 6px; }
.tray button { width: 36px; height: 46px; }
.tray .t-sg { width: 54px; }
.clock { width: 66px; text-align: center; }
.tray .t-note { width: 76px; border-right: 1px solid #9fb3ba; padding-right: 10px; }
```
